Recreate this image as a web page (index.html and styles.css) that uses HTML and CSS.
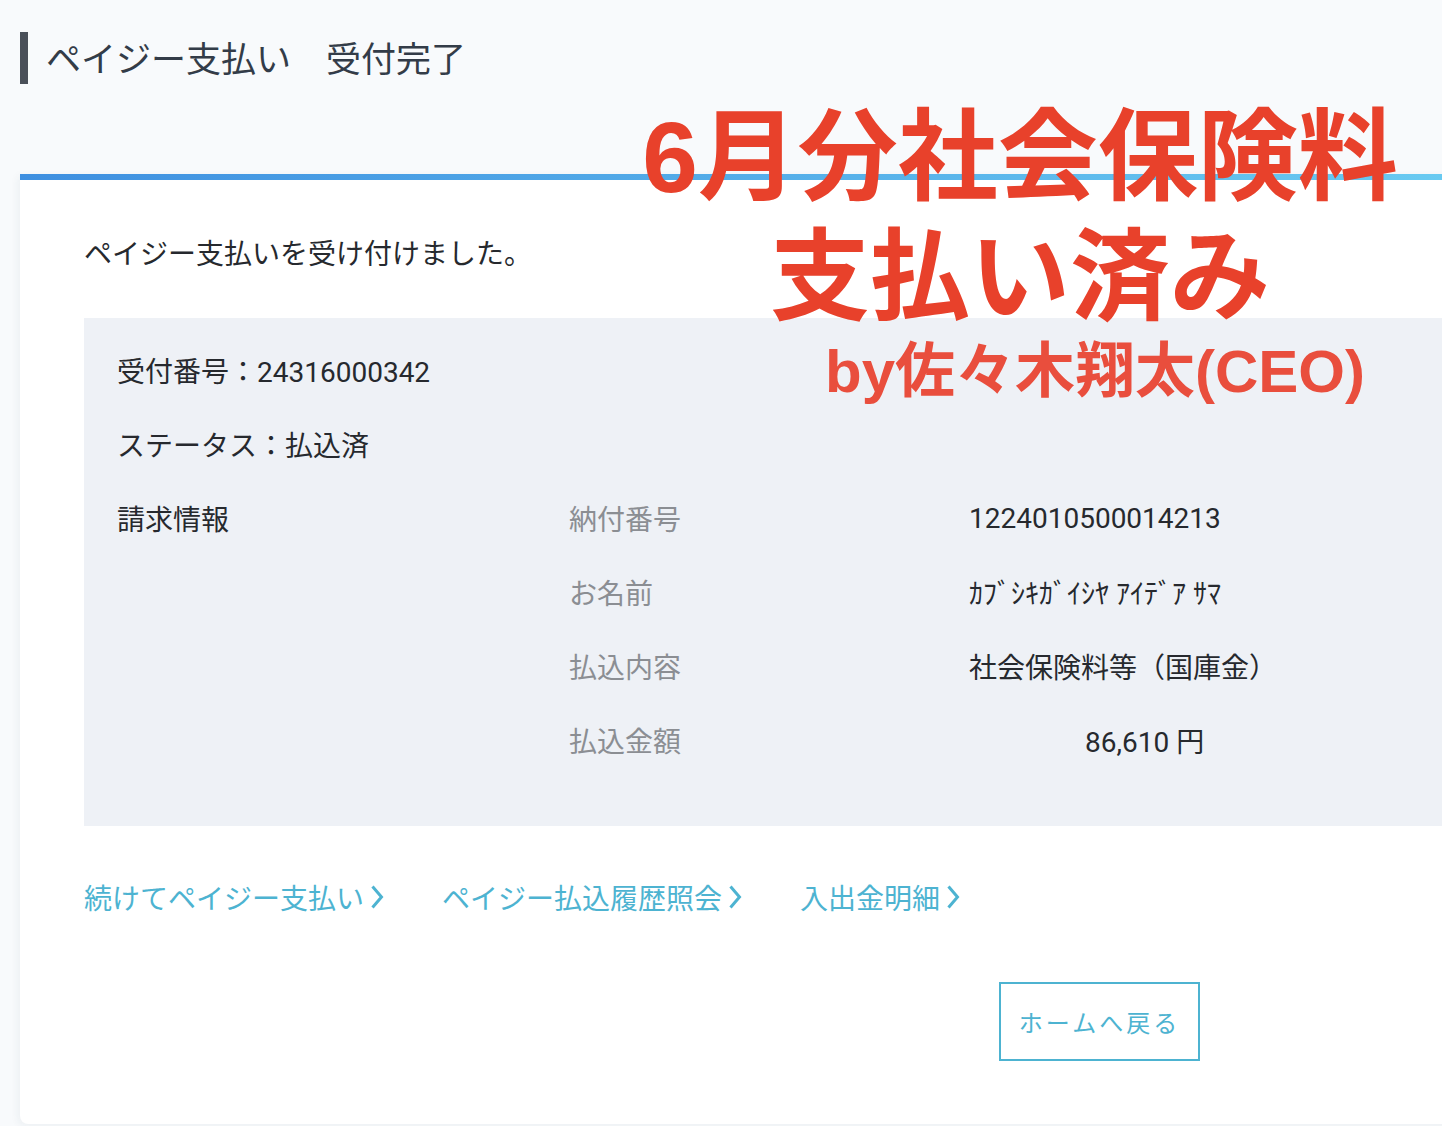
FILE: index.html
```html
<!DOCTYPE html>
<html lang="ja">
<head>
<meta charset="utf-8">
<title>ペイジー支払い 受付完了</title>
<link rel="stylesheet" href="styles.css">
</head>
<body>
<div class="page">
  <header class="page-head">
    <h1 class="title">ペイジー支払い　受付完了</h1>
  </header>

  <section class="card">
    <p class="lead">ペイジー支払いを受け付けました。</p>

    <div class="info">
      <div class="row">受付番号：24316000342</div>
      <div class="row">ステータス：払込済</div>
      <div class="bill">
        <div class="bill-head">請求情報</div>
        <div class="bill-label">納付番号</div>
        <div class="bill-value">1224010500014213</div>
        <div class="bill-label">お名前</div>
        <div class="bill-value">ｶﾌﾞｼｷｶﾞｲｼﾔ ｱｲﾃﾞｱ ｻﾏ</div>
        <div class="bill-label">払込内容</div>
        <div class="bill-value">社会保険料等（国庫金）</div>
        <div class="bill-label">払込金額</div>
        <div class="bill-value"><span class="amount">86,610 円</span></div>
      </div>
    </div>

    <nav class="links">
      <a class="link" href="#">続けてペイジー支払い<svg class="chev" viewBox="0 0 14 26" width="14" height="26"><path d="M2.5 2.5 L11.5 13 L2.5 23.5" fill="none" stroke="currentColor" stroke-width="3"/></svg></a>
      <a class="link" href="#">ペイジー払込履歴照会<svg class="chev" viewBox="0 0 14 26" width="14" height="26"><path d="M2.5 2.5 L11.5 13 L2.5 23.5" fill="none" stroke="currentColor" stroke-width="3"/></svg></a>
      <a class="link" href="#">入出金明細<svg class="chev" viewBox="0 0 14 26" width="14" height="26"><path d="M2.5 2.5 L11.5 13 L2.5 23.5" fill="none" stroke="currentColor" stroke-width="3"/></svg></a>
    </nav>

    <div class="actions">
      <button class="home-btn" type="button">ホームへ戻る</button>
    </div>
  </section>

  <div class="stamp">
    <div class="stamp-line big">6月分社会保険料</div>
    <div class="stamp-line big">支払い済み</div>
    <div class="stamp-line small">by佐々木翔太(CEO)</div>
  </div>
</div>
</body>
</html>
```

FILE: styles.css
```css
html, body {
  margin: 0;
  padding: 0;
  overflow: hidden;
  background: #f8fafc;
}

body {
  font-family: Roboto, "Noto Sans CJK JP", sans-serif;
  color: #2b2f36;
}

.page {
  position: relative;
  padding: 32px 0 0 20px;
  width: 1500px;
  height: 1126px;
  box-sizing: border-box;
}

.title {
  margin: 0;
  height: 52px;
  line-height: 58px;
  border-left: 8px solid #4a5059;
  padding-left: 18px;
  font-size: 35px;
  font-weight: 400;
  color: #333c48;
}

.card {
  margin-top: 90px;
  width: 1500px;
  height: 950px;
  box-sizing: border-box;
  padding: 61px 0 0 64px;
  background:
    linear-gradient(90deg, #3e8fe0 0%, #6bcdf2 100%) top left / 100% 6px no-repeat,
    #ffffff;
  border-radius: 0 0 8px 8px;
  box-shadow: -2px 2px 8px rgba(40, 60, 90, 0.06);
}

.lead {
  margin: 0;
  font-size: 28px;
  line-height: 40px;
  color: #26292e;
}

.info {
  margin-top: 43px;
  background: #eef1f6;
  padding: 15px 33px 49px;
  font-size: 28px;
  color: #26292e;
}

.row {
  height: 74px;
  display: flex;
  align-items: center;
}

.bill {
  display: grid;
  grid-template-columns: 452px 400px 1fr;
  grid-auto-rows: 74px;
  align-items: center;
}

.bill-head {
  grid-column: 1;
}

.bill-label {
  grid-column: 2;
  color: #8b8e93;
}

.bill-value {
  grid-column: 3;
  color: #26292e;
}

.amount {
  padding-left: 116px;
}

.links {
  margin-top: 51px;
  display: flex;
  gap: 58px;
  height: 40px;
  align-items: center;
}

.link {
  display: inline-flex;
  align-items: center;
  gap: 6px;
  font-size: 28px;
  color: #4db3d1;
  text-decoration: none;
}

.chev {
  display: block;
}

.actions {
  margin-top: 65px;
  padding-left: 915px;
}

.home-btn {
  width: 201px;
  height: 79px;
  border: 2px solid #4db3d1;
  background: #ffffff;
  color: #4db3d1;
  font-family: Roboto, "Noto Sans CJK JP", sans-serif;
  font-size: 24px;
  letter-spacing: 3px;
  padding: 0;
}

.stamp {
  position: absolute;
  left: 620px;
  top: 97px;
  width: 800px;
  text-align: center;
  font-family: "Liberation Sans", "Noto Sans CJK JP", sans-serif;
  font-weight: 700;
  color: #e8412b;
}

.stamp-line.big {
  font-size: 100px;
  line-height: 120px;
}

.stamp-line.small {
  font-size: 60px;
  line-height: 70px;
  padding-left: 150px;
  color: #e94e3d;
}
```
